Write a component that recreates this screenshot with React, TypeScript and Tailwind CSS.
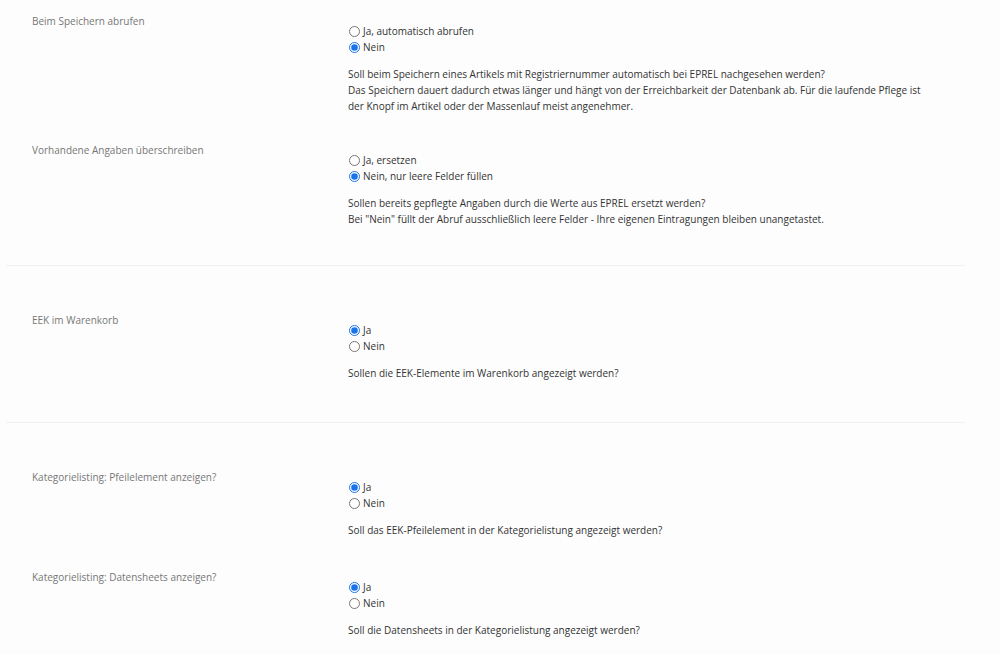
import React, { useState } from 'react';

interface Option {
  value: string;
  label: string;
}

interface SettingProps {
  name: string;
  title: string;
  options: Option[];
  initial: string;
  description: string[];
  bottom?: string;
}

const Setting: React.FC<SettingProps> = ({ name, title, options, initial, description, bottom = 'pb-[15px]' }) => {
  const [value, setValue] = useState(initial);

  return (
    <div className={`flex pt-[13px] ${bottom}`}>
      <div className="w-[348px] shrink-0 pl-[32px] text-[#777]">{title}</div>
      <div className="flex-1 pt-[10px]">
        <div className="flex flex-col">
          {options.map((o) => (
            <label key={o.value} className="flex items-center h-[16px] gap-[3px] text-[#333] cursor-pointer">
              <input
                type="radio"
                name={name}
                checked={value === o.value}
                onChange={() => setValue(o.value)}
                className="m-0 ml-[1px] w-[11px] h-[11px] accent-[#1a73e8]"
              />
              {o.label}
            </label>
          ))}
        </div>
        <div className="mt-[11px] text-[#333]">
          {description.map((line) => (
            <div key={line}>{line}</div>
          ))}
        </div>
      </div>
    </div>
  );
};

const jaNein: Option[] = [
  { value: 'ja', label: 'Ja' },
  { value: 'nein', label: 'Nein' },
];

export default function App() {
  return (
    <div
      className="min-h-[654px] w-[1000px] bg-[#fdfdfd] text-[10px] leading-[16px]"
      style={{ fontFamily: '"Open Sans", "Noto Sans", sans-serif' }}
    >
      {/* EPREL abruf */}
      <div>
        <Setting
          name="fetch"
          title="Beim Speichern abrufen"
          options={[
            { value: 'ja', label: 'Ja, automatisch abrufen' },
            { value: 'nein', label: 'Nein' },
          ]}
          initial="nein"
          description={[
            'Soll beim Speichern eines Artikels mit Registriernummer automatisch bei EPREL nachgesehen werden?',
            'Das Speichern dauert dadurch etwas länger und hängt von der Erreichbarkeit der Datenbank ab. Für die laufende Pflege ist',
            'der Knopf im Artikel oder der Massenlauf meist angenehmer.',
          ]}
        />
        <Setting
          name="overwrite"
          title="Vorhandene Angaben überschreiben"
          options={[
            { value: 'ja', label: 'Ja, ersetzen' },
            { value: 'nein', label: 'Nein, nur leere Felder füllen' },
          ]}
          initial="nein"
          description={[
            'Sollen bereits gepflegte Angaben durch die Werte aus EPREL ersetzt werden?',
            'Bei "Nein" füllt der Abruf ausschließlich leere Felder - Ihre eigenen Eintragungen bleiben unangetastet.',
          ]}
          bottom="pb-[38px]"
        />
      </div>
      <div className="ml-[6px] w-[959px] border-t border-[#f1f1f1]" />

      {/* Warenkorb */}
      <div className="pt-[33px]">
        <Setting
          name="cart"
          title="EEK im Warenkorb"
          options={jaNein}
          initial="ja"
          description={['Sollen die EEK-Elemente im Warenkorb angezeigt werden?']}
          bottom="pb-[41px]"
        />
      </div>
      <div className="ml-[6px] w-[959px] border-t border-[#f1f1f1]" />

      {/* Kategorielisting */}
      <div className="pt-[33px]">
        <Setting
          name="arrow"
          title="Kategorielisting: Pfeilelement anzeigen?"
          options={jaNein}
          initial="ja"
          description={['Soll das EEK-Pfeilelement in der Kategorielistung angezeigt werden?']}
          bottom="pb-[18px]"
        />
        <Setting
          name="sheets"
          title="Kategorielisting: Datensheets anzeigen?"
          options={jaNein}
          initial="ja"
          description={['Soll die Datensheets in der Kategorielistung angezeigt werden?']}
        />
      </div>
    </div>
  );
}
